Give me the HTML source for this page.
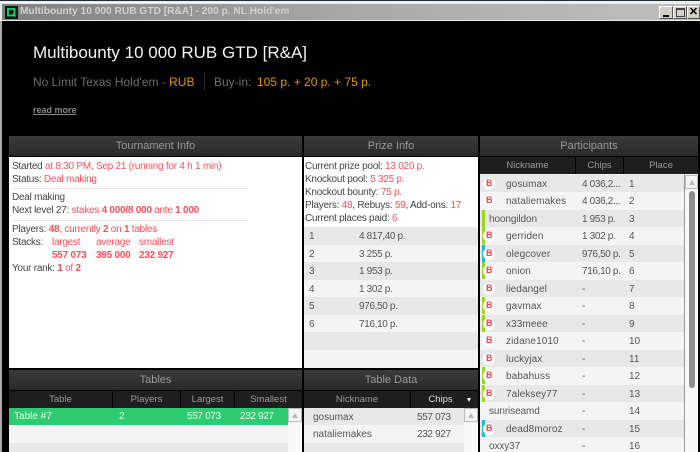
<!DOCTYPE html>
<html><head><meta charset="utf-8"><style>
*{box-sizing:border-box;margin:0;padding:0}
html,body{width:700px;height:452px;overflow:hidden;background:#000}
body{position:relative;font-family:"Liberation Sans",sans-serif;font-size:10px;color:#444}
div,span.a{position:absolute;white-space:nowrap}
.r{color:#f5505c}
.hd{background:linear-gradient(#3a3a3a,#2a2a2a);color:#999;font-size:11px;text-align:center;line-height:21px;height:20px}
.ch{background:#1e1e1e;color:#999;font-size:9.500px;text-align:center;line-height:18px;height:17px;top:0}
.l{left:3px;height:13px;line-height:13px;margin-top:1px;letter-spacing:-.25px}
.row{height:18px;line-height:19px;color:#555}
.e{background:#e8e8e8}.f{background:#f4f4f4}
.b{left:3px;top:3px;width:12px;height:12px;border-radius:6px;background:#fff}
.b:after{content:"B";position:absolute;left:3px;top:0;line-height:11px;font-size:9px;font-weight:bold;color:#f5404f}
.g{left:2px;top:0;width:3px;height:17px;background:#9ad626}
.t{background:#1cbfc9}
.n{left:26px;letter-spacing:.1px}.nn{left:9px;letter-spacing:-.1px}.c{left:102px;letter-spacing:-.35px}.p{left:149px}
.num{letter-spacing:-.35px}
.sb{background:#f4f4f4;border:1px solid #bbb}
.ar{width:0;height:0;border-left:3px solid transparent;border-right:3px solid transparent;border-bottom:5px solid #bbb}
.btn{top:6px;width:14px;height:13px;background:#d4d0c8;border:1px solid;border-color:#fff #555 #555 #fff}
</style></head><body>
<div style="left:0;top:0;width:700px;height:1px;background:#1c2c38"></div>
<div style="left:0;top:1px;width:700px;height:20px;background:#eee"></div>
<div style="left:2px;top:4px;width:698px;height:16px;background:linear-gradient(90deg,#808080,#a8a8a8 50%,#c0c0c0)"></div>
<div style="left:0;top:21px;width:2px;height:431px;background:#aaa"></div>
<div style="left:5px;top:6px;width:13px;height:13px;background:#0c1c14"><svg width="13" height="13" style="display:block"><path d="M3 3H9.500V7.500L7.500 9.500H3Z M8 8L10.500 10.500" fill="none" stroke="#1fd06a" stroke-width="1.800"/></svg></div>
<div style="left:20px;top:4px;height:16px;line-height:16px;font-size:10.200px;font-weight:bold;color:#d0d0d0">Multibounty 10 000 RUB GTD [R&amp;A] - 200 p. NL Hold'em</div>
<div class="btn" style="left:659px"><div style="left:3px;bottom:1px;width:6px;height:2px;background:#000"></div></div>
<div class="btn" style="left:673px"><div style="left:2px;top:1px;width:9px;height:9px;border:1px solid #444;border-top-width:2px"></div></div>
<div class="btn" style="left:687px;width:13px;color:#000;font-size:11px;font-weight:bold;line-height:11px;text-align:center">✕</div>

<div style="left:33px;top:42px;font-size:17px;line-height:22px;color:#f4f4f4">Multibounty 10 000 RUB GTD [R&amp;A]</div>
<div style="left:33px;top:74px;font-size:12px;line-height:16px;color:#6e6e6e">No Limit Texas Hold'em - <span style="color:#dd9a00">RUB</span></div>
<div style="left:204px;top:72px;width:1px;height:19px;background:#2a2a2a"></div>
<div style="left:214px;top:74px;font-size:12px;line-height:16px;color:#6e6e6e">Buy-in:</div>
<div style="left:257px;top:74px;font-size:12px;line-height:16px;color:#dd9a00">105 p. + 20 p. + 75 p.</div>
<div style="left:33px;top:104px;font-size:9px;line-height:12px;font-weight:bold;color:#8a8a8a;text-decoration:underline">read more</div>

<!-- Tournament Info -->
<div class="hd" style="left:9px;top:136px;width:293px">Tournament Info</div>
<div style="left:9px;top:157px;width:293px;height:211px;background:#fff">
<div class="l" style="top:2px">Started <span class="r">at 8:30 PM, Sep 21 (running for 4 h 1 min)</span></div>
<div class="l" style="top:15px">Status: <span class="r">Deal making</span></div>
<div style="left:2px;top:31px;width:237px;height:1px;background:#e4e4e4"></div>
<div class="l" style="top:33px">Deal making</div>
<div class="l" style="top:46px">Next level 27: <span class="r">stakes <b>4 000/8 000</b> ante <b>1 000</b></span></div>
<div style="left:2px;top:63px;width:237px;height:1px;background:#e4e4e4"></div>
<div class="l" style="top:65px">Players: <span class="r"><b>48</b>, currently <b>2</b> on <b>1</b> tables</span></div>
<div class="l" style="top:78px">Stacks:</div>
<div class="l r" style="top:78px;left:43px">largest</div>
<div class="l r" style="top:78px;left:87px">average</div>
<div class="l r" style="top:78px;left:130px">smallest</div>
<div class="l r" style="top:91px;left:43px;font-weight:bold">557 073</div>
<div class="l r" style="top:91px;left:87px;font-weight:bold">395 000</div>
<div class="l r" style="top:91px;left:130px;font-weight:bold">232 927</div>
<div class="l" style="top:104px">Your rank: <span class="r"><b>1</b> of <b>2</b></span></div>
</div>

<!-- Prize Info -->
<div class="hd" style="left:304px;top:136px;width:174px">Prize Info</div>
<div style="left:304px;top:157px;width:174px;height:211px;background:#fff">
<div class="l" style="left:1px;top:2px">Current prize pool: <span class="r">13 020 p.</span></div>
<div class="l" style="left:1px;top:15px">Knockout pool: <span class="r">5 325 p.</span></div>
<div class="l" style="left:1px;top:28px">Knockout bounty: <span class="r">75 p.</span></div>
<div class="l" style="left:1px;top:41px">Players: <span class="r">48</span>, Rebuys: <span class="r">59</span>, Add-ons: <span class="r">17</span></div>
<div class="l" style="left:1px;top:54px">Current places paid: <span class="r">6</span></div>
<div class="row e" style="left:0;top:70px;width:174px"><div style="left:5px">1</div><div class="num" style="left:55px">4 817,40 p.</div></div>
<div class="row f" style="left:0;top:88px;width:174px"><div style="left:5px">2</div><div class="num" style="left:55px">3 255 p.</div></div>
<div class="row e" style="left:0;top:105px;width:174px"><div style="left:5px">3</div><div class="num" style="left:55px">1 953 p.</div></div>
<div class="row f" style="left:0;top:123px;width:174px"><div style="left:5px">4</div><div class="num" style="left:55px">1 302 p.</div></div>
<div class="row e" style="left:0;top:140px;width:174px"><div style="left:5px">5</div><div class="num" style="left:55px">976,50 p.</div></div>
<div class="row f" style="left:0;top:158px;width:174px"><div style="left:5px">6</div><div class="num" style="left:55px">716,10 p.</div></div>
<div class="row e" style="left:0;top:175px;width:174px"></div>
<div class="row f" style="left:0;top:193px;width:174px"></div>
</div>

<!-- Tables -->
<div class="hd" style="left:9px;top:370px;width:293px">Tables</div>
<div class="ch" style="left:9px;top:391px;width:103px">Table</div>
<div class="ch" style="left:113px;top:391px;width:67px">Players</div>
<div class="ch" style="left:181px;top:391px;width:53px">Largest</div>
<div class="ch" style="left:235px;top:391px;width:67px">Smallest</div>
<div class="row" style="left:9px;top:408px;width:279px;height:17px;background:#2ecc71;color:#f4f4f4;line-height:18px"><div style="left:5px">Table #7</div><div style="left:110px">2</div><div class="num" style="left:178px">557 073</div><div class="num" style="left:231px">232 927</div></div>
<div class="f" style="left:9px;top:425px;width:279px;height:18px"></div>
<div class="e" style="left:9px;top:443px;width:279px;height:9px"></div>
<div style="left:288px;top:408px;width:14px;height:44px;background:#f8f8f8"></div>
<div class="sb" style="left:288px;top:408px;width:14px;height:14px"><div class="ar" style="left:3px;top:4px"></div></div>

<!-- Table Data -->
<div class="hd" style="left:304px;top:370px;width:174px">Table Data</div>
<div class="ch" style="left:304px;top:391px;width:106px">Nickname</div>
<div class="ch" style="left:411px;top:391px;width:67px;color:#ddd;padding-right:8px">Chips<div style="right:7px;top:7px;width:0;height:0;border-left:2.500px solid transparent;border-right:2.500px solid transparent;border-top:4px solid #fff"></div></div>
<div class="row e" style="left:304px;top:408px;width:160px"><div style="left:9px">gosumax</div><div class="num" style="left:113px">557 073</div></div>
<div class="row f" style="left:304px;top:425px;width:160px"><div style="left:9px">nataliemakes</div><div class="num" style="left:113px">232 927</div></div>
<div class="e" style="left:304px;top:443px;width:160px;height:9px"></div>
<div style="left:464px;top:408px;width:14px;height:44px;background:#f8f8f8"></div>
<div class="sb" style="left:464px;top:408px;width:14px;height:14px"><div class="ar" style="left:3px;top:4px"></div></div>

<!-- Participants -->
<div class="hd" style="left:480px;top:136px;width:218px">Participants</div>
<div class="ch" style="left:480px;top:157px;width:95px">Nickname</div>
<div class="ch" style="left:576px;top:157px;width:47px">Chips</div>
<div class="ch" style="left:624px;top:157px;width:74px">Place</div>
<div style="left:480px;top:174px;width:218px;height:278px;background:#f4f4f4;overflow:hidden">
<div class="row e" style="left:0;top:1px;width:204px"><div class="b"></div><div class="n">gosumax</div><div class="c">4 036,2...</div><div class="p">1</div></div>
<div class="row f" style="left:0;top:18px;width:204px"><div class="b"></div><div class="n">nataliemakes</div><div class="c">4 036,2...</div><div class="p">2</div></div>
<div class="row e" style="left:0;top:36px;width:204px"><div class="g"></div><div class="nn">hoongildon</div><div class="c">1 953 p.</div><div class="p">3</div></div>
<div class="row f" style="left:0;top:53px;width:204px"><div class="g"></div><div class="b"></div><div class="n">gerriden</div><div class="c">1 302 p.</div><div class="p">4</div></div>
<div class="row e" style="left:0;top:71px;width:204px"><div class="g t"></div><div class="b"></div><div class="n">olegcover</div><div class="c">976,50 p.</div><div class="p">5</div></div>
<div class="row f" style="left:0;top:88px;width:204px"><div class="g"></div><div class="b"></div><div class="n">onion</div><div class="c">716,10 p.</div><div class="p">6</div></div>
<div class="row e" style="left:0;top:106px;width:204px"><div class="b"></div><div class="n">liedangel</div><div class="c">-</div><div class="p">7</div></div>
<div class="row f" style="left:0;top:123px;width:204px"><div class="g"></div><div class="b"></div><div class="n">gavmax</div><div class="c">-</div><div class="p">8</div></div>
<div class="row e" style="left:0;top:141px;width:204px"><div class="g"></div><div class="b"></div><div class="n">x33meee</div><div class="c">-</div><div class="p">9</div></div>
<div class="row f" style="left:0;top:158px;width:204px"><div class="b"></div><div class="n">zidane1010</div><div class="c">-</div><div class="p">10</div></div>
<div class="row e" style="left:0;top:176px;width:204px"><div class="b"></div><div class="n">luckyjax</div><div class="c">-</div><div class="p">11</div></div>
<div class="row f" style="left:0;top:193px;width:204px"><div class="g"></div><div class="b"></div><div class="n">babahuss</div><div class="c">-</div><div class="p">12</div></div>
<div class="row e" style="left:0;top:211px;width:204px"><div class="g"></div><div class="b"></div><div class="n">7aleksey77</div><div class="c">-</div><div class="p">13</div></div>
<div class="row f" style="left:0;top:228px;width:204px"><div class="nn">sunriseamd</div><div class="c">-</div><div class="p">14</div></div>
<div class="row e" style="left:0;top:246px;width:204px"><div class="g t"></div><div class="b"></div><div class="n">dead8moroz</div><div class="c">-</div><div class="p">15</div></div>
<div class="row f" style="left:0;top:263px;width:204px"><div class="nn">oxxy37</div><div class="c">-</div><div class="p">16</div></div>
</div>
<div style="left:684px;top:174px;width:14px;height:278px;background:#f8f8f8;border-left:1px solid #999"></div>
<div class="sb" style="left:685px;top:175px;width:13px;height:14px"><div class="ar" style="left:3px;top:4px"></div></div>
<div style="left:689px;top:191px;width:6px;height:197px;background:#8e8e8e;border-radius:3px"></div>
</body></html>
